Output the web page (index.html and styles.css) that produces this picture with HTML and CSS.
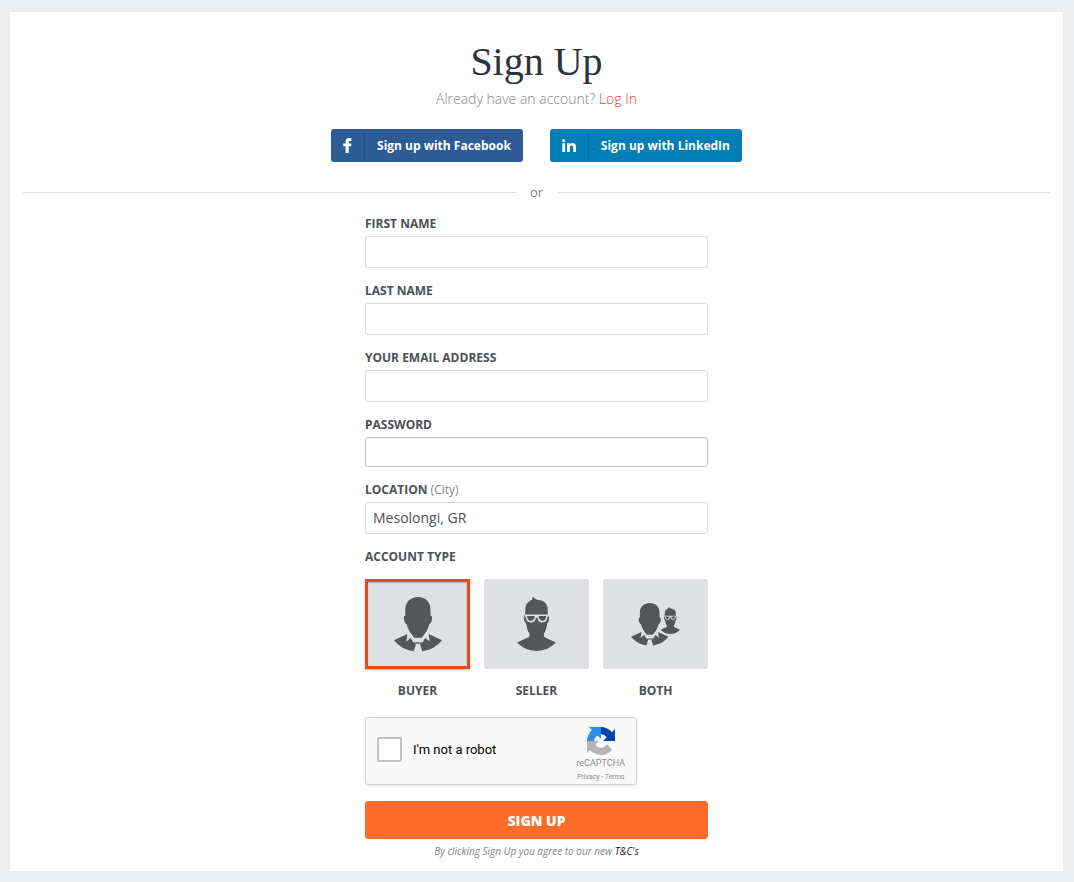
FILE: index.html
```html
<!DOCTYPE html>
<html lang="en">
<head>
    <meta charset="utf-8">
    <title>Sign Up</title>
    <meta name="viewport" content="width=device-width, initial-scale=1">
    <link rel="stylesheet" href="styles.css">
</head>
<body>
    <!-- Shared avatar shapes -->
    <svg class="sprite" aria-hidden="true">
        <symbol id="buyer" viewBox="102 75 144 165">
            <path d="M174 75C197 75 210 90 211 108L212 131C217 131 217 139 215 147C213 154 210 155 208 157C204 172 197 185 187 194H161C151 185 144 172 140 157C137 155 134 151 132 144C131 136 131 131 136 131L136 108C138 90 151 75 174 75Z"/>
            <path d="M102 205L142 186L139 209L152 197L161 213L168 216L161 238Q124 233 102 205Z"/>
            <path d="M246 205L206 186L209 209L196 197L187 213L180 216L187 238Q224 233 246 205Z"/>
            <path d="M158 191H190L185 197H163Z"/>
            <path d="M159 211H189V215H159Z"/>
        </symbol>
        <symbol id="seller" viewBox="111 77 116 161">
            <path d="M156 85L157 77L171 85C190 86 201 96 202 110L203 130C207 131 207 139 206 146C205 152 203 154 201 156C199 170 196 180 191 186V193Q193 198 201 201L227 213Q203 238 169 238Q135 238 111 213L137 201Q147 198 148 193V186C143 180 140 170 138 156C135 154 133 151 132 145C131 138 131 132 135 130L136 110C137 98 145 89 156 85Z"/>
            <path class="lens" d="M134 129H205V135L202 137C200 149 196 153 187 153C177 153 174 149 172 139H167C165 149 162 153 152 153C143 153 139 149 137 137L134 135ZM141 134C142 144 144 148 152 148C160 148 162 144 164 134ZM175 134C177 144 180 148 187 148C194 148 197 144 198 134Z"/>
        </symbol>
    </svg>

    <main class="panel">
        <h1>Sign Up</h1>
        <p class="login">Already have an account? <a href="#">Log In</a></p>

        <div class="social">
            <button type="button" class="social-btn facebook">
                <span class="social-icon">
                    <svg width="9" height="15" viewBox="0 0 9 15"><path d="M8.4.2V3H6.7Q5.7 3 5.7 4V5.5H8.4L8 8.2H5.7V15H2.6V8.2H.2V5.5H2.6V3.7Q2.6 0 6.3 0Z"/></svg>
                </span>
                <span class="social-text">Sign up with Facebook</span>
            </button>
            <button type="button" class="social-btn linkedin">
                <span class="social-icon">
                    <svg width="14" height="13" viewBox="0 0 14 13"><circle cx="1.7" cy="1.6" r="1.6"/><path d="M.3 4.2H3.1V13H.3ZM5 4.2H7.7V5.4Q8.7 4 10.5 4Q14 4 14 8V13H11.2V8.6Q11.2 6.4 9.6 6.4Q7.8 6.4 7.8 8.6V13H5Z"/></svg>
                </span>
                <span class="social-text">Sign up with LinkedIn</span>
            </button>
        </div>

        <div class="divider">or</div>

        <form class="signup">
            <div class="field">
                <label for="first-name">FIRST NAME</label>
                <input type="text" id="first-name">
            </div>
            <div class="field">
                <label for="last-name">LAST NAME</label>
                <input type="text" id="last-name">
            </div>
            <div class="field">
                <label for="email">YOUR EMAIL ADDRESS</label>
                <input type="email" id="email">
            </div>
            <div class="field">
                <label for="password">PASSWORD</label>
                <input type="password" id="password">
            </div>
            <div class="field">
                <label for="location">LOCATION <span class="hint">(City)</span></label>
                <input type="text" id="location" value="Mesolongi, GR">
            </div>

            <fieldset>
                <legend>ACCOUNT TYPE</legend>
                <div class="types">
                    <label class="type">
                        <input type="radio" name="type" value="buyer" checked>
                        <span class="card"><svg width="48" height="55"><use href="#buyer"/></svg></span>
                        <span>BUYER</span>
                    </label>
                    <label class="type">
                        <input type="radio" name="type" value="seller">
                        <span class="card"><svg width="39" height="54"><use href="#seller"/></svg></span>
                        <span>SELLER</span>
                    </label>
                    <label class="type">
                        <input type="radio" name="type" value="both">
                        <span class="card">
                            <svg width="49" height="43" viewBox="0 0 146 128">
                                <use href="#buyer" width="112" height="128"/>
                                <use href="#seller" x="88" y="12" width="58" height="80"/>
                            </svg>
                        </span>
                        <span>BOTH</span>
                    </label>
                </div>
            </fieldset>

            <div class="captcha">
                <input type="checkbox" id="robot">
                <label for="robot">I'm not a robot</label>
                <div class="captcha-brand">
                    <svg width="28" height="28" viewBox="0 0 64 64">
                        <path fill="#0645a8" d="M64 31.955l-.033-1.37V4.687l-7.16 7.16C50.948 4.674 42.033.093 32.05.093c-10.4 0-19.622 4.96-25.458 12.64l11.736 11.86a15.55 15.55 0 0 1 4.754-5.334c2.05-1.6 4.952-2.906 8.968-2.906.485 0 .86.057 1.135.163 4.976.393 9.288 3.14 11.828 7.124l-8.307 8.307L64 31.953"/>
                        <path fill="#2a8ceb" d="M31.862.094l-1.37.033H4.594l7.16 7.16C4.58 13.147 0 22.06 0 32.046c0 10.4 4.96 19.622 12.64 25.458L24.5 45.768a15.55 15.55 0 0 1-5.334-4.754c-1.6-2.05-2.906-4.952-2.906-8.968 0-.485.057-.86.163-1.135.393-4.976 3.14-9.288 7.124-11.828l8.307 8.307L31.86.095"/>
                        <path fill="#b5b5b5" d="M.001 32.045l.033 1.37v25.898l7.16-7.16c5.86 7.173 14.774 11.754 24.76 11.754 10.4 0 19.622-4.96 25.458-12.64l-11.736-11.86a15.55 15.55 0 0 1-4.754 5.334c-2.05 1.6-4.952 2.906-8.968 2.906-.485 0-.86-.057-1.135-.163-4.976-.393-9.288-3.14-11.828-7.124l8.307-8.307c-10.522.04-22.4.066-27.295-.005"/>
                    </svg>
                    <span class="captcha-name">reCAPTCHA</span>
                    <span class="captcha-links"><a href="#">Privacy</a> - <a href="#">Terms</a></span>
                </div>
            </div>

            <button type="submit" class="submit">SIGN UP</button>
            <p class="terms">By clicking Sign Up you agree to our new <a href="#">T&amp;C's</a></p>
        </form>
    </main>
</body>
</html>
```
FILE: styles.css
```css
* {
    margin: 0;
    padding: 0;
    box-sizing: border-box;
}

body {
    padding: 12px 11px 11px 10px;
    background: #ebecee;
    color: #4c5055;
    font-family: "Open Sans", sans-serif;
    font-size: 12px;
    line-height: 17px;
}

a {
    text-decoration: none;
}

button {
    border: none;
    border-radius: 3px;
    color: #fff;
    font-family: inherit;
    cursor: pointer;
}

.sprite {
    position: absolute;
    width: 0;
    height: 0;
}

.panel {
    padding: 26px 13px 11px;
    background: #fff;
}

h1 {
    color: #2c323c;
    font-family: "Liberation Serif", serif;
    font-size: 40px;
    font-weight: 400;
    line-height: 48px;
    text-align: center;
}

.login {
    margin-top: 3px;
    color: #85857f;
    font-size: 14px;
    font-weight: 300;
    line-height: 20px;
    text-align: center;
}

.login a {
    color: #e03a3e;
}

/* Social buttons */
.social {
    display: flex;
    flex-wrap: wrap;
    justify-content: center;
    gap: 27px;
    margin-top: 20px;
}

.social-btn {
    display: flex;
    align-items: center;
    height: 33px;
    font-size: 12px;
    font-weight: 700;
}

.facebook {
    background: #2d5b96;
}

.linkedin {
    background: #007eb5;
}

.social-icon {
    display: flex;
    align-items: center;
    height: 28px;
    padding: 0 12px;
    border-right: 1px solid rgba(0, 0, 0, 0.12);
}

.social-text {
    padding: 0 12px;
}

.social-icon svg {
    fill: #fff;
}

.divider {
    display: flex;
    align-items: center;
    gap: 14px;
    margin-top: 22px;
    color: #85857f;
    font-size: 13px;
}

.divider::before,
.divider::after {
    content: "";
    flex: 1;
    height: 1px;
    background: #dcdddd;
}

/* Form */
.signup {
    max-width: 343px;
    margin: 14px auto 0;
}

.field {
    margin-bottom: 14px;
}

.field label,
legend,
.type {
    display: block;
    font-weight: 700;
}

.field .hint {
    color: #85857f;
    font-weight: 400;
}

.field input {
    display: block;
    width: 100%;
    height: 32px;
    margin-top: 4px;
    padding: 0 7px 1px;
    border: 1px solid #dadada;
    border-radius: 3px;
    background: #fff;
    color: #4c5055;
    font-family: inherit;
    font-size: 14px;
}

.field input[type="password"] {
    height: 30px;
    border-color: #c4c4c4;
    box-shadow: inset 0 1px 1px rgba(0, 0, 0, 0.08);
}

fieldset {
    border: none;
}

.types {
    display: grid;
    grid-template-columns: repeat(3, 1fr);
    gap: 14px;
    margin-top: 14px;
}

.type {
    text-align: center;
    cursor: pointer;
}

.type input {
    position: absolute;
    opacity: 0;
}

.card {
    display: flex;
    align-items: center;
    justify-content: center;
    height: 90px;
    margin-bottom: 13px;
    border-radius: 3px;
    background: #dfe0e4;
}

.card svg {
    fill: #53575a;
}

.lens {
    fill: #dfe0e4;
    fill-rule: evenodd;
}

.type input:checked + .card {
    border: 3px solid #e04e20;
    border-radius: 0;
    box-shadow: 0 1px 2px rgba(0, 0, 0, 0.3), inset 0 1px 2px rgba(0, 0, 0, 0.2);
}

/* Captcha */
.captcha {
    display: flex;
    align-items: center;
    max-width: 272px;
    height: 68px;
    margin-top: 18px;
    padding: 0 11px 3px;
    border: 1px solid #d3d3d3;
    border-radius: 3px;
    background: #f9f9f9;
    box-shadow: 0 1px 3px rgba(0, 0, 0, 0.1);
    color: #000;
    font-family: Roboto, sans-serif;
    font-size: 13px;
}

.captcha input {
    width: 25px;
    height: 25px;
    margin-right: 11px;
    appearance: none;
    border: 2px solid #c1c1c1;
    border-radius: 2px;
    background: #fff;
}

.captcha input:checked {
    background: #2a8ceb;
}

.captcha-brand {
    display: flex;
    flex-direction: column;
    align-items: center;
    margin-left: auto;
    padding-top: 12px;
    color: #8a8a8a;
}

.captcha-brand a {
    color: inherit;
}

.captcha-name {
    margin-top: 2px;
    font-size: 9px;
    line-height: 13px;
}

.captcha-links {
    font-size: 7px;
    line-height: 14px;
}

.submit {
    display: block;
    width: 100%;
    height: 38px;
    margin-top: 16px;
    background: #ff6b28;
    font-size: 14px;
    font-weight: 800;
}

.terms {
    margin-top: 4px;
    color: #85857f;
    font-size: 10px;
    font-style: italic;
    text-align: center;
}

.terms a {
    color: #1d2129;
}
```
